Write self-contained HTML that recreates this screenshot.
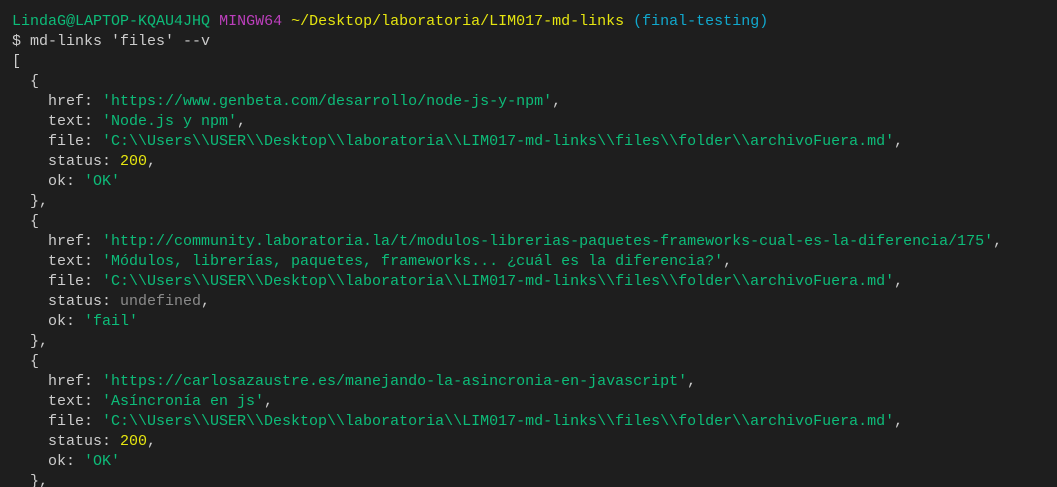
<!DOCTYPE html>
<html><head><meta charset="utf-8"><style>
html,body{margin:0;padding:0;background:#1e1e1e;width:1057px;height:487px;overflow:hidden}
pre{margin:0;padding:12px 0 0 12px;font-family:"Liberation Mono",monospace;font-size:15px;line-height:20px;color:#cccccc;white-space:pre}
.g{color:#0dbc79}.m{color:#bc3fbc}.y{color:#e5e510}.c{color:#11a8cd}.s{color:#0dbc79}.n{color:#e5e510}.u{color:#8a8a8a}
</style></head><body><pre><span class="g">LindaG@LAPTOP-KQAU4JHQ</span> <span class="m">MINGW64</span> <span class="y">~/Desktop/laboratoria/LIM017-md-links</span> <span class="c">(final-testing)</span>
$ md-links 'files' --v
[
  {
    href: <span class="s">'https://www.genbeta.com/desarrollo/node-js-y-npm'</span>,
    text: <span class="s">'Node.js y npm'</span>,
    file: <span class="s">'C:\\Users\\USER\\Desktop\\laboratoria\\LIM017-md-links\\files\\folder\\archivoFuera.md'</span>,
    status: <span class="n">200</span>,
    ok: <span class="s">'OK'</span>
  },
  {
    href: <span class="s">'http://community.laboratoria.la/t/modulos-librerias-paquetes-frameworks-cual-es-la-diferencia/175'</span>,
    text: <span class="s">'Módulos, librerías, paquetes, frameworks... ¿cuál es la diferencia?'</span>,
    file: <span class="s">'C:\\Users\\USER\\Desktop\\laboratoria\\LIM017-md-links\\files\\folder\\archivoFuera.md'</span>,
    status: <span class="u">undefined</span>,
    ok: <span class="s">'fail'</span>
  },
  {
    href: <span class="s">'https://carlosazaustre.es/manejando-la-asincronia-en-javascript'</span>,
    text: <span class="s">'Asíncronía en js'</span>,
    file: <span class="s">'C:\\Users\\USER\\Desktop\\laboratoria\\LIM017-md-links\\files\\folder\\archivoFuera.md'</span>,
    status: <span class="n">200</span>,
    ok: <span class="s">'OK'</span>
  },
</pre></body></html>
